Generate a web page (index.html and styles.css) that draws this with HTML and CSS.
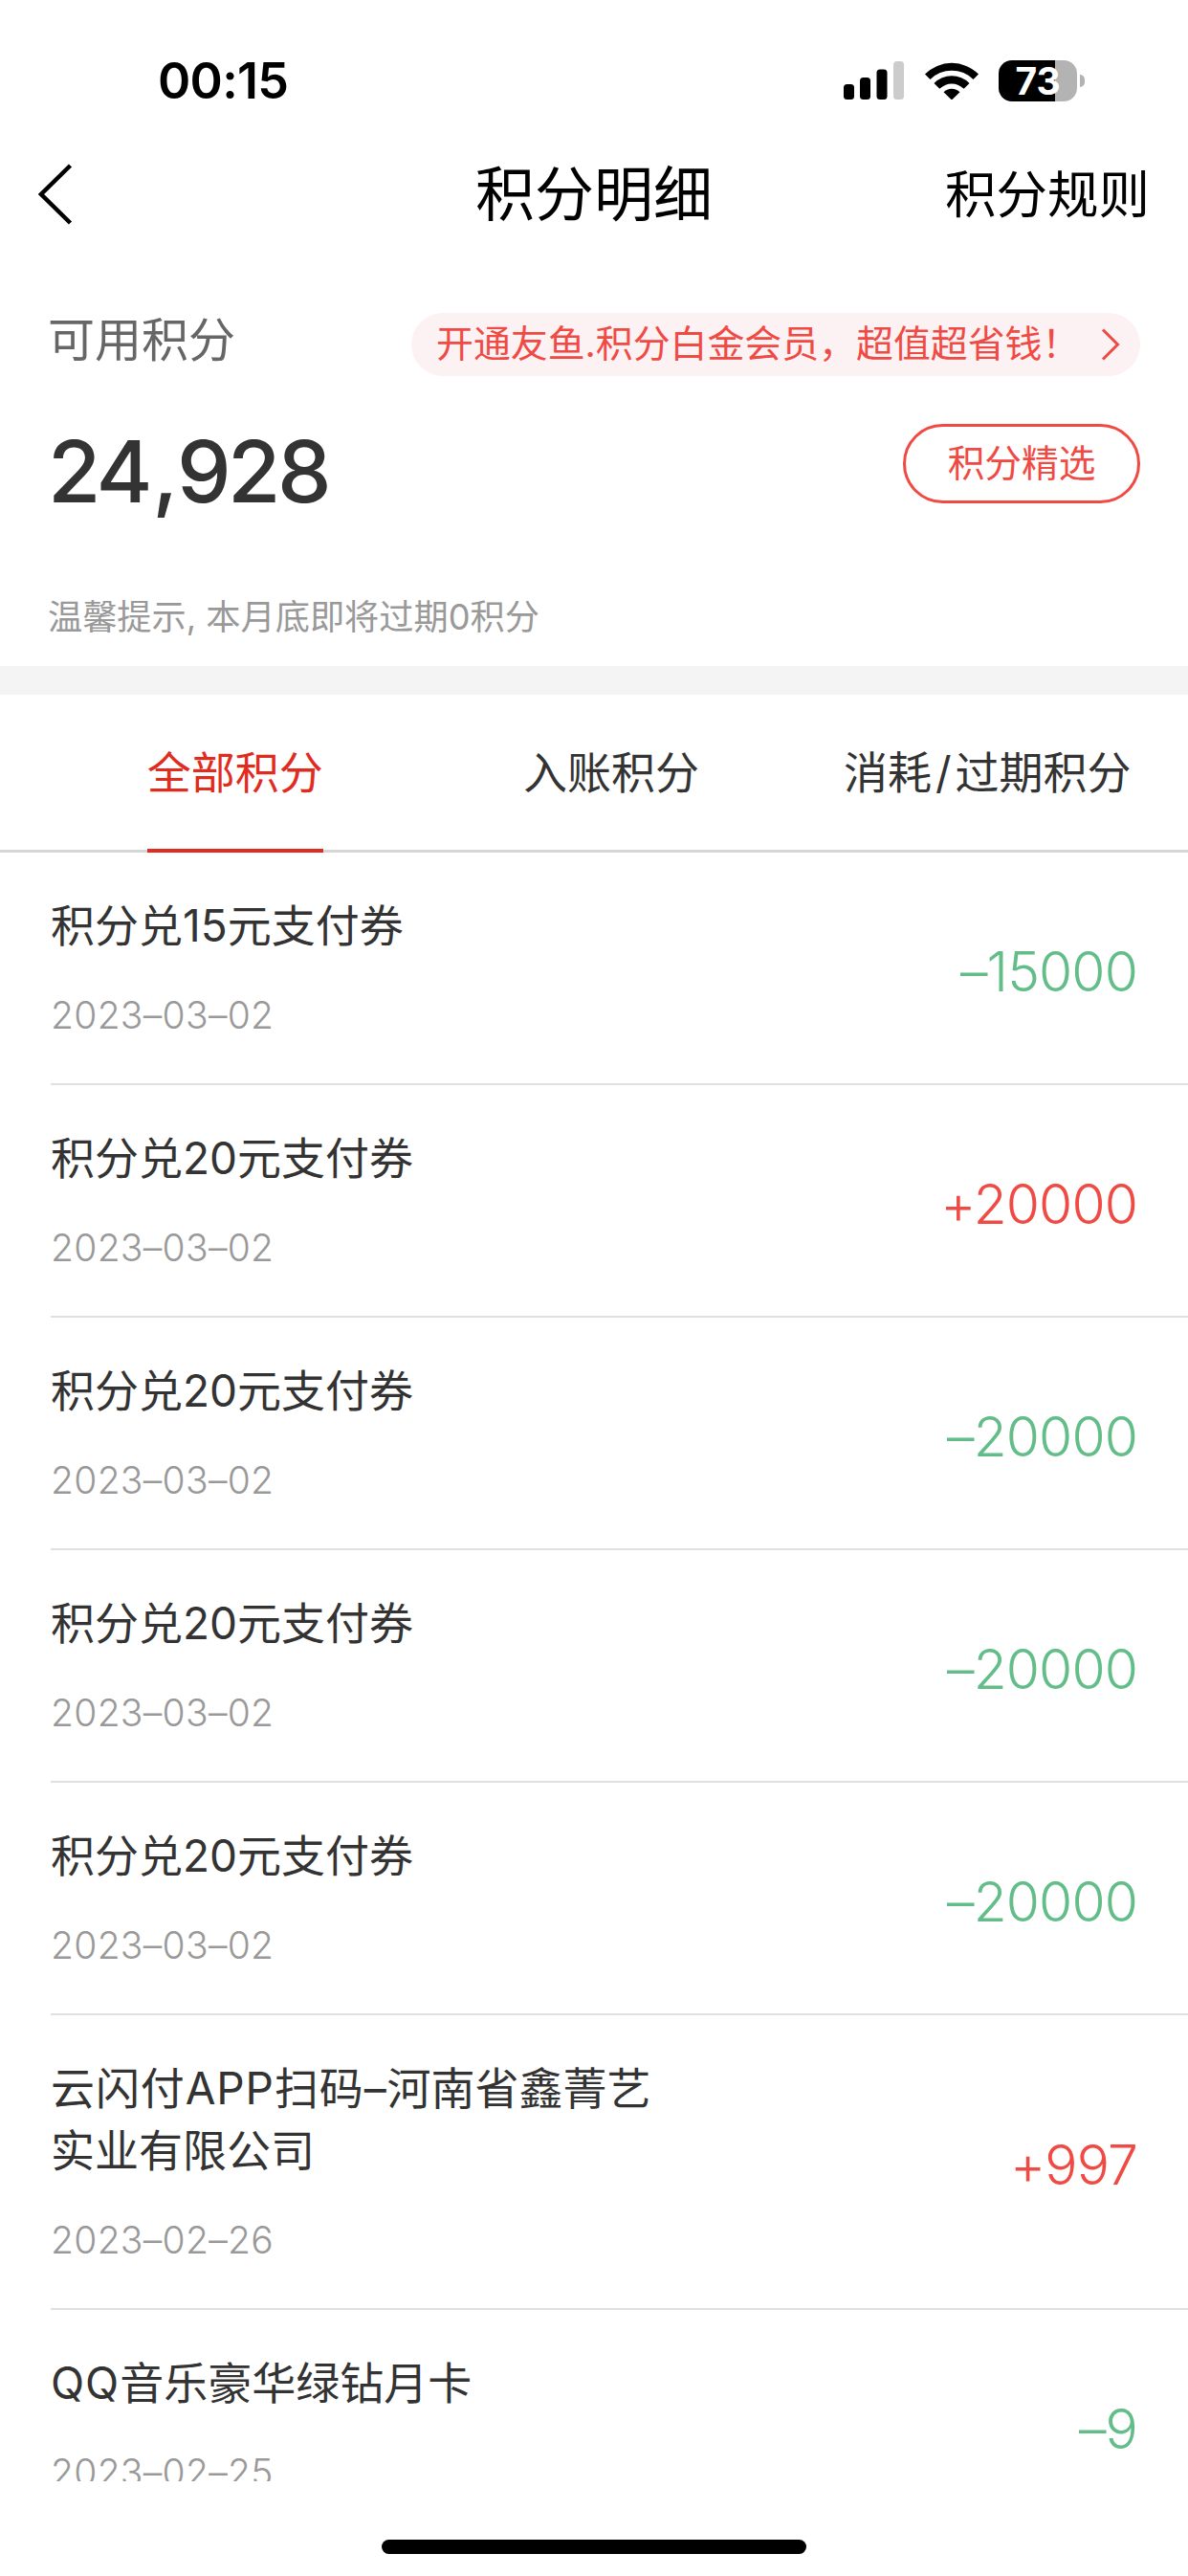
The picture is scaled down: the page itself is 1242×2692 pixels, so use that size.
FILE: index.html
```
<!DOCTYPE html>
<html lang="zh-CN">
<head>
  <meta charset="utf-8">
  <title>积分明细</title>
  <meta name="viewport" content="width=device-width, initial-scale=1">
  <link rel="stylesheet" href="styles.css">
</head>
<body>
  <div class="page">
    <div class="status-bar">
      <div class="time">00:15</div>
      <div class="status-icons">
        <svg class="signal" width="63" height="40" viewBox="0 0 63 40">
          <rect x="0" y="24" width="11" height="16" rx="3.5"/>
          <rect x="17" y="17" width="11" height="23" rx="3.5"/>
          <rect x="34.5" y="8.500" width="11" height="31.500" rx="3.5"/>
          <rect x="52" y="0" width="11" height="40" rx="3.5" fill="#ccc"/>
        </svg>
        <svg class="wifi" width="56" height="40" viewBox="0 0 56 40">
          <path d="M0 13.500a39.500 39.500 0 0 1 56 0l-5.500 5.500a31.800 31.800 0 0 0-45 0z"/>
          <path d="M9.500 23a26.200 26.200 0 0 1 37 0l-5.800 5.800a18 18 0 0 0-25.400 0z"/>
          <path d="M19.500 32.200a12 12 0 0 1 17 0L28 40.500z"/>
        </svg>
        <div class="battery">73</div>
        <div class="battery-cap"></div>
      </div>
    </div>

    <div class="nav">
      <svg class="back" width="36" height="64" viewBox="0 0 36 64">
        <path d="M33.500 2L3 32l30.500 30" fill="none" stroke="#000" stroke-width="4.500"/>
      </svg>
      <h1>积分明细</h1>
      <a class="rule">积分规则</a>
    </div>

    <div class="summary">
      <div class="summary-row">
        <div class="label">可用积分</div>
        <div class="vip">
          <span>开通友鱼.积分白金会员，超值超省钱！</span>
          <svg width="20" height="34" viewBox="0 0 20 34">
            <path d="M2 1.500L17.500 17L2 32.500" fill="none" stroke="#f04a44" stroke-width="3"/>
          </svg>
        </div>
      </div>
      <div class="summary-row points-row">
        <div class="points">24<span class="comma">,</span>928</div>
        <div class="pick">积分精选</div>
      </div>
      <div class="tip">温馨提示, 本月底即将过期0积分</div>
    </div>

    <div class="tabs">
      <div class="tab active"><span>全部积分</span></div>
      <div class="tab"><span>入账积分</span></div>
      <div class="tab"><span>消耗<i class="slash">/</i>过期积分</span></div>
    </div>

    <div class="list">
      <div class="item">
        <div class="info">
          <div class="name">积分兑15元支付券</div>
          <div class="date">2023–03–02</div>
        </div>
        <div class="amount minus">–15000</div>
      </div>
      <div class="item">
        <div class="info">
          <div class="name">积分兑20元支付券</div>
          <div class="date">2023–03–02</div>
        </div>
        <div class="amount plus">+20000</div>
      </div>
      <div class="item">
        <div class="info">
          <div class="name">积分兑20元支付券</div>
          <div class="date">2023–03–02</div>
        </div>
        <div class="amount minus">–20000</div>
      </div>
      <div class="item">
        <div class="info">
          <div class="name">积分兑20元支付券</div>
          <div class="date">2023–03–02</div>
        </div>
        <div class="amount minus">–20000</div>
      </div>
      <div class="item">
        <div class="info">
          <div class="name">积分兑20元支付券</div>
          <div class="date">2023–03–02</div>
        </div>
        <div class="amount minus">–20000</div>
      </div>
      <div class="item">
        <div class="info">
          <div class="name"><span class="latin">云闪付APP扫码–</span>河南省鑫菁艺<br>实业有限公司</div>
          <div class="date">2023–02–26</div>
        </div>
        <div class="amount plus">+997</div>
      </div>
      <div class="item">
        <div class="info">
          <div class="name"><span class="latin">QQ</span>音乐豪华绿钻月卡</div>
          <div class="date">2023–02–25</div>
        </div>
        <div class="amount minus">–9</div>
      </div>
    </div>

    <div class="home"><div class="home-bar"></div></div>
  </div>
</body>
</html>
```
FILE: styles.css
```
* {
  box-sizing: border-box;
}

body {
  margin: 0;
  background: #fff;
  color: #333;
  font-family: Inter, "Noto Sans CJK SC", sans-serif;
}

.page {
  width: 1242px;
  height: 2692px;
  display: flex;
  flex-direction: column;
  overflow: hidden;
}

/* 状态栏 */
.status-bar {
  height: 140px;
  padding: 56px 108px 0 165px;
  display: flex;
  justify-content: space-between;
  color: #000;
}

.time {
  height: 58px;
  line-height: 58px;
  font-size: 52px;
  font-weight: 600;
  letter-spacing: -0.700px;
}

.status-icons {
  height: 56px;
  display: flex;
  align-items: center;
}

.wifi {
  margin-left: 22px;
}

.battery {
  width: 82px;
  height: 43px;
  margin-left: 21px;
  border-radius: 14px;
  background: linear-gradient(to right, #000 59px, #b3b3b3 59px);
  color: #fff;
  font-size: 39px;
  font-weight: 700;
  line-height: 43px;
  text-align: center;
}

.battery-cap {
  width: 5px;
  height: 13px;
  margin-left: 3px;
  border-radius: 0 5px 5px 0;
  background: #b3b3b3;
}

/* 标题栏 */
.nav {
  height: 126px;
  padding: 0 40px 0 40px;
  display: grid;
  grid-template-columns: 1fr auto 1fr;
  align-items: center;
  color: #000;
}

.nav h1 {
  margin: 0;
  padding-top: 2px;
  font-size: 62px;
  font-weight: 400;
  line-height: 80px;
}

.rule {
  justify-self: end;
  padding-top: 2px;
  font-size: 53.5px;
  line-height: 80px;
}

/* 积分概览 */
.summary {
  height: 460px;
  padding: 61px 50px 0 50px;
  border-bottom: 30px solid #f4f4f4;
}

.summary-row {
  display: flex;
  justify-content: space-between;
}

.label {
  height: 57px;
  line-height: 57px;
  font-size: 49px;
  color: #666;
}

.vip {
  width: 762px;
  height: 66px;
  padding: 0 21px 0 26px;
  border-radius: 33px;
  background: #fcf1f3;
  color: #f04a44;
  display: flex;
  align-items: center;
  justify-content: space-between;
  font-size: 38.900px;
  line-height: 64px;
  white-space: nowrap;
}

.vip span {
  height: 66px;
}

.points-row {
  margin-top: 50px;
}

.points {
  height: 100px;
  line-height: 100px;
  font-size: 90px;
  font-weight: 550;
  letter-spacing: -3.500px;
}

.comma {
  margin: 0 2px 0 3px;
}

.pick {
  width: 248px;
  height: 83px;
  border: 3px solid #f04a44;
  border-radius: 42px;
  color: #f04a44;
  font-size: 38.700px;
  line-height: 76px;
  text-align: center;
}

.tip {
  margin-top: 77px;
  height: 50px;
  line-height: 50px;
  font-size: 36.200px;
  color: #999;
}

/* 分类标签 */
.tabs {
  height: 165px;
  padding: 0 13px 0 49px;
  border-bottom: 3px solid #d6d6d6;
  display: flex;
}

.tab {
  flex: 1;
  text-align: center;
  font-size: 46px;
  line-height: 163px;
  white-space: nowrap;
}

.tab span {
  display: inline-block;
  height: 165px;
}

.slash {
  margin: 0 4px;
  font-style: normal;
}

.tab.active {
  color: #e02b1f;
}

.tab.active span {
  border-bottom: 4px solid #e02b1f;
}

/* 积分列表 */
.list {
  height: 1702px;
  padding-left: 53px;
  overflow: hidden;
}

.item {
  padding: 44px 53px 46px 0;
  border-bottom: 2px solid #e0e0e0;
  display: flex;
  align-items: center;
  justify-content: space-between;
}

.name {
  font-size: 46px;
  line-height: 65px;
}

.latin {
  letter-spacing: 0.900px;
}

.date {
  margin-top: 36px;
  font-size: 39px;
  font-weight: 350;
  line-height: 50px;
  letter-spacing: 0.300px;
  color: #999;
}

.amount {
  padding-top: 10px;
  font-size: 57px;
  font-weight: 350;
  line-height: 60px;
  letter-spacing: -0.900px;
}

.minus {
  color: #62bd88;
}

.plus {
  color: #f04a44;
}

/* 底部横条 */
.home {
  flex: 1;
  padding-top: 61px;
}

.home-bar {
  width: 444px;
  height: 15px;
  margin: 0 auto;
  border-radius: 8px;
  background: #000;
}
```
